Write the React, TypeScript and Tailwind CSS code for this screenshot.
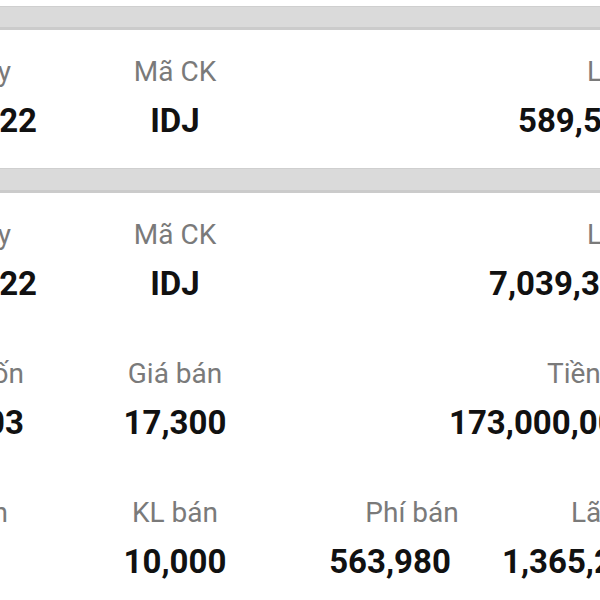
type Cell = {
  label: string;
  value: string;
  cell: string;
  labelPad: string;
  valuePad: string;
};

const firstCard: Cell[] = [
  { label: "Ngày", value: "15/07/22", cell: "items-end", labelPad: "pr-[69px]", valuePad: "pr-[43px]" },
  { label: "Mã CK", value: "IDJ", cell: "items-center", labelPad: "", valuePad: "" },
  { label: "Lãi/lỗ", value: "589,520,000", cell: "col-span-2 items-start", labelPad: "pl-[317px]", valuePad: "pl-[248px]" },
];

const secondCard: Cell[] = [
  { label: "Ngày", value: "15/07/22", cell: "items-end", labelPad: "pr-[69px]", valuePad: "pr-[43px]" },
  { label: "Mã CK", value: "IDJ", cell: "items-center", labelPad: "", valuePad: "" },
  { label: "Lãi/lỗ", value: "7,039,360,000", cell: "col-span-2 items-start", labelPad: "pl-[317px]", valuePad: "pl-[219px]" },
  { label: "Giá vốn", value: "17,103", cell: "items-end", labelPad: "pr-[56px]", valuePad: "pr-[56px]" },
  { label: "Giá bán", value: "17,300", cell: "items-center", labelPad: "", valuePad: "" },
  { label: "Tiền bán", value: "173,000,000", cell: "col-span-2 items-start", labelPad: "pl-[277px]", valuePad: "pl-[179px]" },
  { label: "Tiền vốn", value: "", cell: "items-end", labelPad: "pr-[72px]", valuePad: "pr-[56px]" },
  { label: "KL bán", value: "10,000", cell: "items-center", labelPad: "", valuePad: "" },
  { label: "Phí bán", value: "563,980", cell: "items-center", labelPad: "pl-[54px]", valuePad: "pl-[10px]" },
  { label: "Lãi/lỗ", value: "1,365,220", cell: "items-start", labelPad: "pl-[71px]", valuePad: "pl-[2px]" },
];

function Divider({ height }: { height: string }) {
  return (
    <div
      className={`${height} bg-[#dadada] border-t border-t-[#cfcfcf] border-b-[3px] border-b-[#cbcbcb]`}
    />
  );
}

function Card({ cells }: { cells: Cell[] }) {
  return (
    <div className="bg-white pt-[28px] pb-[31px]">
      <div className="-ml-[300px] w-[1200px] grid grid-cols-[380px_190px_230px_400px] gap-y-[60px]">
        {cells.map((c, i) => (
          <div key={i} className={`flex flex-col gap-[18px] whitespace-nowrap ${c.cell}`}>
            <div className={`text-[28px] leading-none text-[#7a7a7a] ${c.labelPad}`}>
              {c.label}
            </div>
            <div className={`h-[33px] text-[33px] leading-none font-bold text-[#111111] ${c.valuePad}`}>
              {c.value}
            </div>
          </div>
        ))}
      </div>
    </div>
  );
}

export default function App() {
  return (
    <div className="w-[600px] h-[600px] overflow-hidden bg-white font-['Roboto',sans-serif]">
      <div className="h-[6px] bg-white" />
      <Divider height="h-[24px]" />
      <Card cells={firstCard} />
      <Divider height="h-[25px]" />
      <Card cells={secondCard} />
    </div>
  );
}
